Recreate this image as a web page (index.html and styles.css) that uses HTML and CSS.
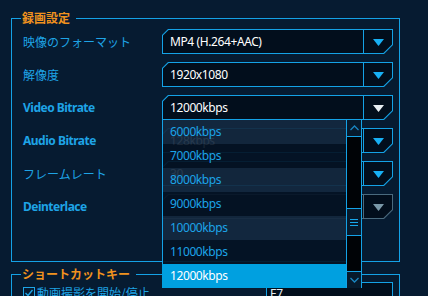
FILE: index.html
```html
<!DOCTYPE html>
<html lang="ja">
<head>
<meta charset="utf-8">
<link rel="stylesheet" href="styles.css">
</head>
<body>
<div class="screen">
  <fieldset class="group rec">
    <legend>録画設定</legend>
    <div class="rows">
      <div class="row">
        <span class="lbl">映像のフォーマット</span>
        <div class="combo"><div class="combo-in"><span class="val">MP4 (H.264+AAC)</span><span class="btn"><svg class="arr" width="11" height="7" viewBox="0 0 11 7"><path d="M0 0H11L5.5 7Z"/></svg></span></div></div>
      </div>
      <div class="row">
        <span class="lbl">解像度</span>
        <div class="combo"><div class="combo-in"><span class="val">1920x1080</span><span class="btn"><svg class="arr" width="11" height="7" viewBox="0 0 11 7"><path d="M0 0H11L5.5 7Z"/></svg></span></div></div>
      </div>
      <div class="row">
        <span class="lbl lat">Video Bitrate</span>
        <div class="combo-wrap">
          <div class="combo"><div class="combo-in"><span class="val">12000kbps</span><span class="btn"><svg class="arr focus" width="11" height="7" viewBox="0 0 11 7"><path d="M0 0H11L5.5 7Z"/></svg></span></div></div>
          <div class="list">
            <ul class="items">
              <li class="alt">6000kbps</li>
              <li>7000kbps</li>
              <li class="alt">8000kbps</li>
              <li>9000kbps</li>
              <li class="alt">10000kbps</li>
              <li>11000kbps</li>
              <li class="sel">12000kbps</li>
            </ul>
            <div class="sbar">
              <span class="sb-up"><svg width="9" height="6" viewBox="0 0 9 6"><path d="M0.5 5L4.5 1L8.5 5"/></svg></span>
              <span class="sb-thumb"><svg width="8" height="9" viewBox="0 0 8 9"><path d="M0 1.5H8M0 4.5H8M0 7.5H8"/></svg></span>
              <span class="sb-down"><svg width="9" height="6" viewBox="0 0 9 6"><path d="M0.5 1L4.5 5L8.5 1"/></svg></span>
            </div>
          </div>
        </div>
      </div>
      <div class="row">
        <span class="lbl lat">Audio Bitrate</span>
        <div class="combo"><div class="combo-in"><span class="val">128kbps</span><span class="btn"><svg class="arr" width="11" height="7" viewBox="0 0 11 7"><path d="M0 0H11L5.5 7Z"/></svg></span></div></div>
      </div>
      <div class="row">
        <span class="lbl">フレームレート</span>
        <div class="combo"><div class="combo-in"><span class="val">30</span><span class="btn"><svg class="arr" width="11" height="7" viewBox="0 0 11 7"><path d="M0 0H11L5.5 7Z"/></svg></span></div></div>
      </div>
      <div class="row">
        <span class="lbl lat">Deinterlace</span>
        <div class="combo off"><div class="combo-in"><span class="val"></span><span class="btn"><svg class="arr" width="11" height="7" viewBox="0 0 11 7"><path d="M0 0H11L5.5 7Z"/></svg></span></div></div>
      </div>
    </div>
  </fieldset>
  <fieldset class="group keys">
    <legend>ショートカットキー</legend>
    <div class="keyrow">
      <label class="chk"><span class="box"><svg width="10" height="10" viewBox="0 0 10 10"><path d="M1.5 5L4 7.5L8.5 2"/></svg></span>動画撮影を開始/停止</label>
      <div class="keyfield">F7</div>
    </div>
  </fieldset>
</div>
</body>
</html>
```
FILE: styles.css
```css
html, body {
  margin: 0;
  padding: 0;
}
body {
  background: #061b31;
  width: 428px;
  height: 296px;
  overflow: hidden;
  font-family: "Noto Sans", "Noto Sans CJK JP", sans-serif;
  font-size: 12px;
  color: #1ea4e6;
}
.screen {
  padding: 10px 0 0 11px;
}
.group {
  box-sizing: border-box;
  width: 389px;
  margin: 0;
  border: 1px solid #14a2e6;
  min-inline-size: 0;
}
.group legend {
  font-family: "Noto Sans CJK JP", sans-serif;
  font-weight: bold;
  font-size: 12px;
  line-height: 16px;
  color: #f0921e;
  padding: 0 6px 0 1px;
  margin-left: -2px;
}
.rec {
  padding: 3px 6px 42px 11px;
}
.rows {
  display: flex;
  flex-direction: column;
  gap: 8px;
}
.row {
  display: flex;
  align-items: center;
  height: 25px;
}
.lbl {
  width: 139px;
  font-family: "Noto Sans CJK JP", sans-serif;
  font-size: 12px;
  line-height: 16px;
  color: #1ea4e6;
}
.lbl.lat {
  font-family: "Noto Sans", sans-serif;
  font-weight: bold;
  letter-spacing: -0.5px;
}
.combo-wrap {
  position: relative;
}
.combo {
  box-sizing: border-box;
  width: 231px;
  height: 25px;
  padding: 1px;
  background: #14a2e6;
  clip-path: polygon(6px 0, 100% 0, 100% calc(100% - 9px), calc(100% - 9px) 100%, 0 100%, 0 6px);
}
.combo-in {
  display: flex;
  height: 100%;
  background: #020e1c;
  clip-path: polygon(5.6px 0, 100% 0, 100% calc(100% - 8.6px), calc(100% - 8.6px) 100%, 0 100%, 0 5.6px);
}
.val {
  flex: 1;
  padding-left: 7px;
  font-family: "Noto Sans", sans-serif;
  font-size: 12px;
  line-height: 23px;
  letter-spacing: -0.4px;
  color: #ffffff;
}
.btn {
  box-sizing: border-box;
  width: 29px;
  border-left: 1px solid #14a2e6;
  display: flex;
  justify-content: center;
  align-items: center;
  padding-top: 1px;
}
.arr path {
  fill: #18b0f4;
}
.arr.focus path {
  fill: #e8eef2;
}
.combo.off {
  background: #4a6a7e;
}
.combo.off .btn {
  border-left-color: #4a6a7e;
}
.combo.off .arr path {
  fill: #7a98a8;
}
.list {
  position: absolute;
  left: 0;
  top: 25px;
  z-index: 5;
  width: 200px;
  height: 168px;
  display: flex;
}
.items {
  list-style: none;
  margin: 0;
  padding: 0;
  flex: 1;
  border-left: 1px solid #14a2e6;
}
.items li {
  height: 24px;
  line-height: 23px;
  padding-left: 7px;
  font-family: "Noto Sans", sans-serif;
  font-size: 12px;
  letter-spacing: -0.4px;
  color: #1ca4e8;
  background: rgba(4, 18, 36, 0.92);
}
.items li.alt {
  background: rgba(19, 40, 63, 0.92);
}
.items li.sel {
  background: #00a0e0;
  color: #ffffff;
  margin-left: -1px;
  padding-left: 8px;
}
.sbar {
  box-sizing: border-box;
  width: 16px;
  display: flex;
  flex-direction: column;
  background: #000306;
  border-left: 1px solid #14a2e6;
  border-right: 1px solid #14a2e6;
}
.sbar svg path {
  fill: none;
  stroke: #1a86c2;
  stroke-width: 1.3;
}
.sb-up, .sb-down {
  display: flex;
  justify-content: center;
  align-items: center;
  height: 16px;
  background: #071a2c;
}
.sb-up {
  border-bottom: 1px solid #14a2e6;
}
.sb-down {
  margin-top: auto;
  border-top: 1px solid #14a2e6;
}
.sb-thumb {
  margin-top: 71px;
  height: 26px;
  border-top: 1px solid #14a2e6;
  border-bottom: 1px solid #14a2e6;
  background: #071a2c;
  display: flex;
  justify-content: center;
  align-items: center;
}
.sb-thumb svg path {
  stroke: #18a8ec;
  stroke-width: 1;
}
.keys {
  margin-top: 4px;
  padding: 0 6px 0 11px;
  height: 34px;
}
.keyrow {
  display: flex;
  align-items: flex-start;
}
.chk {
  display: flex;
  align-items: center;
  margin-top: 3px;
  font-family: "Noto Sans CJK JP", sans-serif;
  font-size: 12px;
  line-height: 16px;
  color: #1ea4e6;
}
.box {
  box-sizing: border-box;
  width: 12px;
  height: 12px;
  border: 1px solid #1ea4e6;
  margin-right: 2px;
  display: flex;
  justify-content: center;
  align-items: center;
}
.box svg path {
  fill: none;
  stroke: #1ea4e6;
  stroke-width: 1.4;
}
.keyfield {
  box-sizing: border-box;
  margin-left: auto;
  width: 127px;
  height: 24px;
  border: 1px solid #14a2e6;
  background: #020e1c;
  padding-left: 3px;
  font-family: "Noto Sans", sans-serif;
  font-size: 12px;
  line-height: 22px;
  color: #e8eef2;
}
```
